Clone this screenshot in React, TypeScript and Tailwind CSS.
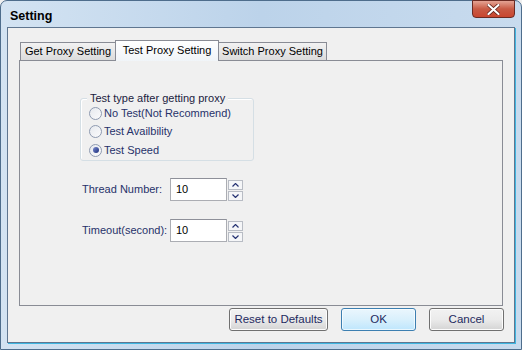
import React from "react";

const font = { fontFamily: '"Liberation Sans", Arial, sans-serif' };

function Radio({ checked, label }: { checked?: boolean; label: string }) {
  return (
    <div className="flex items-center h-[18.5px]">
      <div className="w-[13px] h-[13px] rounded-full border border-[#8e9ab0] bg-gradient-to-br from-[#e6e9ee] to-[#fbfbfc] flex items-center justify-center">
        {checked && <div className="w-[6px] h-[6px] rounded-full bg-gradient-to-br from-[#7b8bd0] to-[#1e2d7a]" />}
      </div>
      <span className="ml-[2px] text-[11px] text-[#27326a] leading-none">{label}</span>
    </div>
  );
}

function Spin({ label }: { label: string }) {
  return (
    <div className="flex items-center h-[23px]">
      <span className="w-[88px] text-[11px] text-[#27326a] leading-none">{label}</span>
      <div className="w-[57px] h-[23px] bg-white border border-[#abadb3] border-t-[#8e9099] flex items-center pl-[5px] text-[11px] text-black">10</div>
      <div className="ml-[1px] flex flex-col gap-[1px] pt-[1px]">
        <div className="w-[15px] h-[10px] border border-[#b8bcc4] bg-[#f5f6f8] flex items-center justify-center">
          <svg width="7" height="4" viewBox="0 0 7 4"><path d="M0.5 3.5 L3.5 0.5 L6.5 3.5" fill="none" stroke="#253272" strokeWidth="1.2" /></svg>
        </div>
        <div className="w-[15px] h-[10px] border border-[#b8bcc4] bg-[#f5f6f8] flex items-center justify-center">
          <svg width="7" height="4" viewBox="0 0 7 4"><path d="M0.5 0.5 L3.5 3.5 L6.5 0.5" fill="none" stroke="#253272" strokeWidth="1.2" /></svg>
        </div>
      </div>
    </div>
  );
}

function Btn({ label, w, focus }: { label: string; w: string; focus?: boolean }) {
  return (
    <div
      className={
        (focus
          ? "border-[#3c7fb1] bg-gradient-to-b from-[#eaf6fd] via-[#d9f0fc] to-[#bee6fd] shadow-[inset_0_0_0_1px_#ffffffaa]"
          : "border-[#707070] bg-gradient-to-b from-[#f2f2f2] via-[#ebebeb] to-[#d4d4d4] shadow-[inset_0_0_0_1px_#fcfcfc]") +
        " " + w + " h-[23px] border rounded-[3px] flex items-center justify-center text-[11.5px] text-[#1e2a60]"
      }
    >
      {label}
    </div>
  );
}

export default function App() {
  return (
    <div style={font} className="w-[522px] h-[350px] overflow-hidden bg-[#f0f0f0]">
      <div className="w-[522px] h-[350px] relative rounded-t-[7px] border border-[#4e6d8c] bg-gradient-to-r from-[#d3e3f2] via-[#bcd3ea] to-[#c8dbee] flex flex-col">
        {/* title bar */}
        <div className="h-[26px] flex items-center pl-[9px] shrink-0">
          <span className="text-[12.5px] font-bold text-black pt-[4px]">Setting</span>
        </div>
        {/* close button */}
        <div className="absolute right-[6px] top-[-1px] w-[43px] h-[18px] rounded-b-[4px] border border-[#6b2a22] bg-gradient-to-b from-[#e4a394] via-[#c85a44] to-[#c9462f] flex items-center justify-center">
          <svg width="13" height="11" viewBox="0 0 13 11">
            <path d="M1.5 1 L11.5 10 M11.5 1 L1.5 10" stroke="#5a1d16" strokeWidth="3.6" strokeLinecap="round" />
            <path d="M1.5 1 L11.5 10 M11.5 1 L1.5 10" stroke="#ffffff" strokeWidth="2.2" strokeLinecap="round" />
          </svg>
        </div>
        {/* client */}
        <div className="ml-[6px] mr-[6px] h-[316px] border border-[#5f7690] bg-[#f0f0f0] flex flex-col pl-[11px] pt-[11px] shadow-[1px_1px_0_#3fb6e0]">
          {/* tabs */}
          <div className="flex items-end h-[21px] pl-[1px] relative z-10">
            <div className="w-[96px] h-[18px] border border-[#898c95] border-b-0 bg-gradient-to-b from-[#f2f2f2] to-[#dcdcdc] flex items-center justify-center text-[11px] text-black">Get Proxy Setting</div>
            <div className="w-[104px] h-[21px] border border-[#898c95] border-b-0 bg-gradient-to-b from-[#ffffff] to-[#f0f4f8] flex items-center justify-center text-[11px] text-black -ml-[1px] -mr-[1px] mb-[-1px] pb-[2px]">Test Proxy Setting</div>
            <div className="w-[109px] h-[18px] border border-[#898c95] border-b-0 bg-gradient-to-b from-[#f2f2f2] to-[#dcdcdc] flex items-center justify-center text-[11px] text-black">Switch Proxy Setting</div>
          </div>
          {/* panel */}
          <div className="w-[484px] h-[246px] border border-[#898c95] bg-[#f0f0f0] flex flex-col pl-[60px] pt-[30px]">
            <div className="relative w-[174px] h-[70px] pt-[7px]">
              <div className="w-[174px] h-[63px] border border-[#d5dfe5] rounded-[3px] shadow-[inset_1px_1px_0_#ffffff]" />
              <div className="absolute left-[7px] top-0 px-[3px] bg-[#f0f0f0] text-[11px] text-[#1b2240] leading-[14px]">Test type after getting proxy</div>
              <div className="absolute left-[9px] top-[13px] flex flex-col">
                <Radio label="No Test(Not Recommend)" />
                <Radio label="Test Availbility" />
                <Radio checked label="Test Speed" />
              </div>
            </div>
            <div className="pl-[2px] mt-[17px] flex flex-col gap-[18px]">
              <Spin label="Thread Number:" />
              <Spin label="Timeout(second):" />
            </div>
          </div>
          {/* buttons */}
          <div className="flex mt-[2px] pl-[210px] gap-[13px]">
            <Btn label="Reset to Defaults" w="w-[99px]" />
            <Btn label="OK" w="w-[75px]" focus />
            <Btn label="Cancel" w="w-[75px]" />
          </div>
        </div>
      </div>
    </div>
  );
}
